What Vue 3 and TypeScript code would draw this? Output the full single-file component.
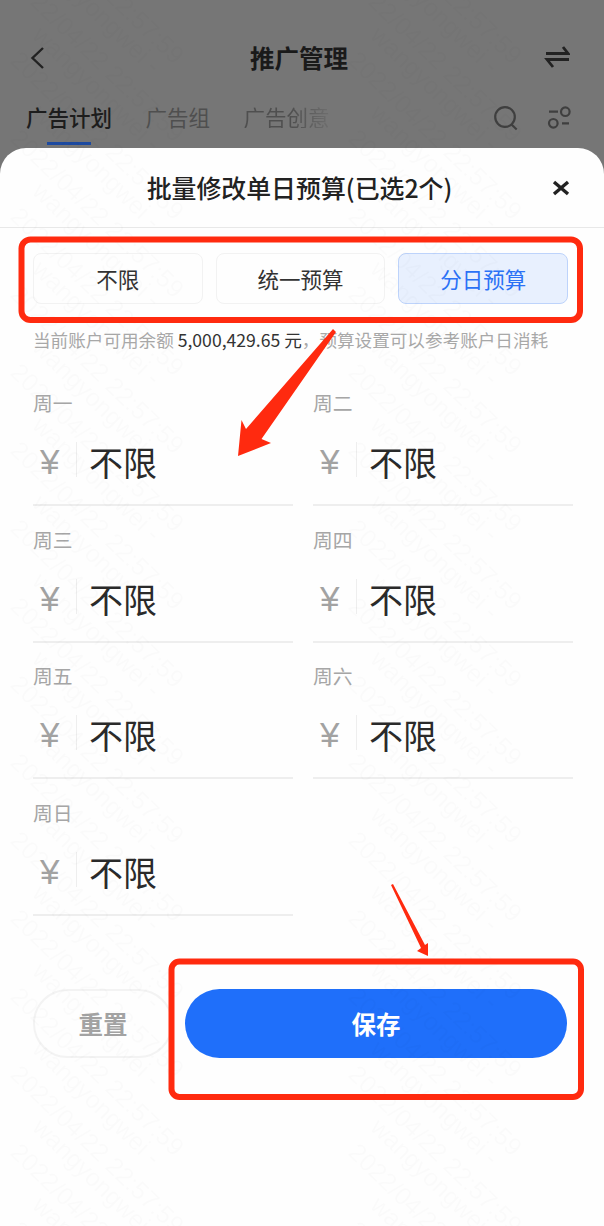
<script setup lang="ts">
const days: string[] = ['周一', '周二', '周三', '周四', '周五', '周六', '周日']
const modes = [
  { label: '不限', active: false },
  { label: '统一预算', active: false },
  { label: '分日预算', active: true },
]
const marks = Array.from({ length: 19 }, (_, r) => r).flatMap((r) =>
  [0, 1].map((c) => ({ key: `${r}-${c}`, x: c * 338, y: 1232 - r * 78 })),
)
</script>

<template>
  <div class="page">
    <header class="nav">
      <svg class="ic" width="20" height="26" viewBox="0 0 20 26"><path d="M15 3 4.5 13 15 23" /></svg>
      <h1>推广管理</h1>
      <svg class="ic swap" width="26" height="26" viewBox="0 0 26 26"><path d="M2 8.5h22L19 2M25 14.5H3L9 22" /></svg>
    </header>
    <nav class="tabs">
      <span class="tab current">广告计划</span>
      <span class="tab">广告组</span>
      <span class="tab fade">广告创意</span>
      <span class="spacer"></span>
      <svg class="ic" width="26" height="28" viewBox="0 0 26 28"><circle cx="12" cy="14" r="9.8" /><path d="m18.5 21.5 5.2 5" /></svg>
      <svg class="ic" width="24" height="28" viewBox="0 0 24 28"><circle cx="18.3" cy="8.7" r="4.3" /><circle cx="6.3" cy="20.3" r="4.3" /><path d="M2 8.7h9M15 20.3h7" /></svg>
    </nav>

    <section class="sheet">
      <div class="sheet-head">
        <h2>批量修改单日预算(已选2个)</h2>
        <svg class="close" width="18" height="18" viewBox="0 0 18 18"><path d="m2 3 14 12M16 3 2 15" /></svg>
      </div>
      <div class="modes">
        <button v-for="m in modes" :key="m.label" class="mode" :class="{ active: m.active }">{{ m.label }}</button>
      </div>
      <p class="note">当前账户可用余额 <b>5,000,429.65 元</b>，预算设置可以参考账户日消耗</p>
      <div class="grid">
        <div v-for="d in days" :key="d" class="field">
          <label>{{ d }}</label>
          <div class="value">
            <span class="yen">¥</span>
            <i class="sep"></i>
            <span class="val">不限</span>
          </div>
        </div>
      </div>
      <div class="actions">
        <button class="reset">重置</button>
        <button class="save">保存</button>
      </div>
    </section>

    <svg class="watermark" width="604" height="1226" viewBox="0 0 604 1226">
      <g v-for="m in marks" :key="m.key">
        <text :transform="`translate(${m.x + 9} ${m.y}) rotate(44)`">2022/04/22 22:57:59</text>
        <text :transform="`translate(${m.x + 31} ${m.y + 53}) rotate(44)`">wangyongwei -</text>
      </g>
    </svg>

    <svg class="marks" width="604" height="1226" viewBox="0 0 604 1226">
      <rect x="21.5" y="239.5" width="558.5" height="80.5" rx="9" />
      <rect x="171.5" y="961.5" width="409.5" height="135.5" rx="8" />
      <polygon class="fill" points="333,329 336,332 261.5,439 271,443 238,456 241.5,420 246,429" />
      <polygon class="fill" points="391,885 393,884 425,945 428,943 428,956 417,951 421,948" />
    </svg>
  </div>
</template>

<style>
body { margin: 0; }
</style>

<style scoped>
.page {
  position: relative;
  width: 604px;
  height: 1226px;
  overflow: hidden;
  background: #767676;
  font-family: "Noto Sans CJK SC", "Noto Sans", sans-serif;
}
h1, h2, p { margin: 0; }
button { font-family: inherit; padding: 0; }
.ic { fill: none; stroke: #3f3f3f; stroke-width: 2.2; flex: none; }
.nav {
  height: 116px;
  box-sizing: border-box;
  padding: 0 34px 0 28px;
  display: grid;
  grid-template-columns: 1fr auto 1fr;
  align-items: center;
}
.nav .ic { stroke: #222; stroke-width: 2.4; }
.nav .swap { justify-self: end; stroke-width: 2.8; }
.nav h1 { font-size: 24.5px; font-weight: 700; color: #1a1a1a; line-height: 1; }
.tabs {
  height: 32px;
  box-sizing: border-box;
  padding: 0 33px 0 26px;
  display: flex;
  align-items: flex-start;
  gap: 33.5px;
  position: relative;
}
.tabs .ic { margin-top: -13px; }
.tabs .ic:last-child { margin-left: -5.5px; }
.tab { font-size: 21.5px; line-height: 1; color: #4f4f4f; margin-top: -10px; }
.tab.current { color: #1d1d1d; position: relative; font-weight: 500; }
.tab.current::after {
  content: "";
  position: absolute;
  left: 21px;
  right: 21px;
  top: 36px;
  height: 3px;
  background: #1d4aa0;
}
.tab.fade {
  background: linear-gradient(90deg, #4f4f4f 55%, #6b6b6b 95%);
  -webkit-background-clip: text;
  background-clip: text;
  color: transparent;
}
.spacer { flex: 1; }
.sheet {
  height: 1078px;
  background: #fefefe;
  border-radius: 26px 26px 0 0;
  position: relative;
}
.sheet-head {
  height: 80px;
  box-sizing: border-box;
  padding-right: 5px;
  border-bottom: 1px solid #e8e8e8;
  display: flex;
  align-items: center;
  justify-content: center;
  position: relative;
}
.sheet-head h2 { font-size: 24.9px; font-weight: 500; color: #222; line-height: 1; }
.close {
  position: absolute;
  right: 34px;
  top: 31px;
  fill: none;
  stroke: #222;
  stroke-width: 3.4;
}
.modes {
  margin: 25px 36px 0 33px;
  display: grid;
  grid-template-columns: repeat(3, 1fr);
  gap: 13px;
}
.mode {
  height: 51px;
  border: 1px solid #f2f2f2;
  border-radius: 8px;
  background: #fefefe;
  font-size: 21.5px;
  color: #333;
}
.mode.active {
  background: #e8f0fe;
  border-color: #bdd3fb;
  color: #2b72f6;
}
.note {
  margin: 24px 0 0 33px;
  font-size: 17.6px;
  line-height: 24px;
  color: #a8a8a8;
  white-space: nowrap;
}
.note b { font-weight: 400; color: #333; }
.grid {
  margin: 40px 31px 0 33px;
  display: grid;
  grid-template-columns: 260px 260px;
  column-gap: 20px;
  row-gap: 22.5px;
}
.field { height: 114px; box-sizing: border-box; border-bottom: 2px solid #eeeeee; }
.field label { display: block; font-size: 19.8px; line-height: 22px; color: #a6a6a6; }
.value { display: flex; align-items: flex-start; margin-top: 27px; height: 41px; }
.yen {
  width: 43px;
  box-sizing: border-box;
  padding-left: 7px;
  font-family: "Liberation Sans", sans-serif;
  font-size: 35px;
  line-height: 41px;
  color: #a2a2a2;
}
.sep { display: block; width: 1px; height: 35px; margin-top: 1px; background: #eeeeee; }
.val { margin-left: 12px; font-size: 34px; line-height: 41px; color: #2a2a2a; }
.actions {
  margin: 73px 37px 0 33px;
  display: flex;
  gap: 12px;
}
.reset, .save { height: 69px; border-radius: 35px; font-size: 24.5px; font-weight: 700; }
.reset { width: 140px; border: 2px solid #f3f3f3; background: #fefefe; color: #a3a3a3; }
.save { flex: 1; border: 0; background: #1f6ffa; color: #fff; }
.watermark {
  position: absolute;
  left: 0;
  top: 0;
  pointer-events: none;
  font-family: "Liberation Sans", sans-serif;
  font-size: 25px;
  fill: #000;
  opacity: 0.013;
}
.marks { position: absolute; left: 0; top: 0; fill: none; stroke: #ff2a0f; stroke-width: 6; pointer-events: none; }
.marks .fill { fill: #ff2a0f; stroke: none; }
</style>
